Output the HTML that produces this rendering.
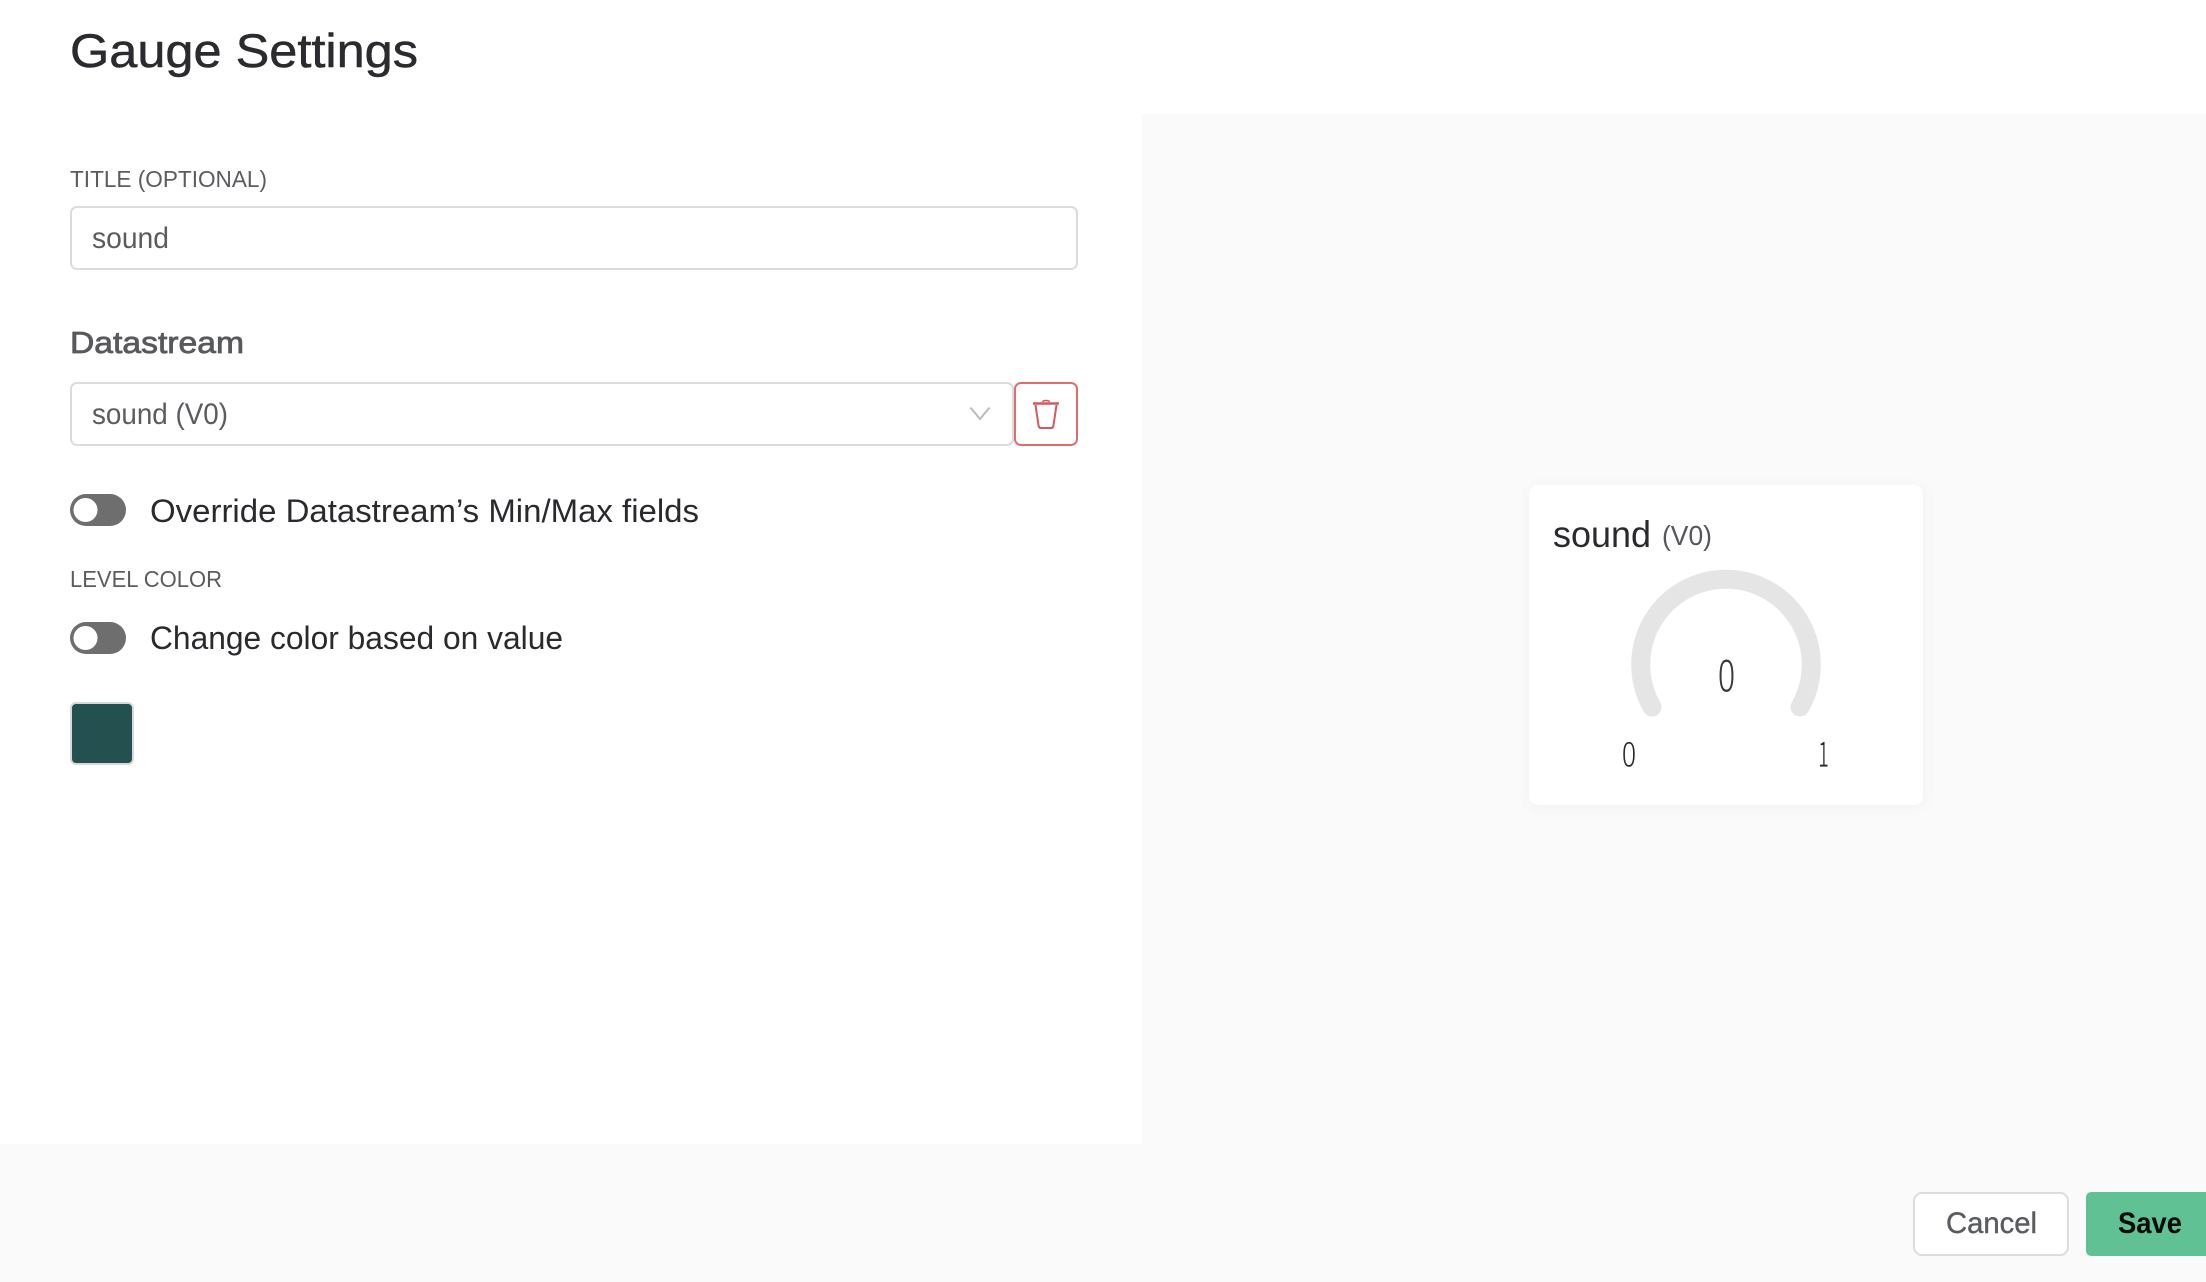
<!DOCTYPE html>
<html lang="en">
<head>
<meta charset="utf-8">
<title>Gauge Settings</title>
<style>
html,body{margin:0;padding:0;width:2206px;height:1282px;overflow:hidden;background:#fff;}
svg{display:block;position:absolute;left:0;top:0;}
text{font-family:"Liberation Sans",sans-serif;}
.card{position:absolute;left:1529px;top:485px;width:394px;height:320px;background:#fff;border-radius:9px;box-shadow:0 2px 16px rgba(0,0,0,.045);}
</style>
</head>
<body>
<svg width="2206" height="1282" viewBox="0 0 2206 1282" xmlns="http://www.w3.org/2000/svg" style="z-index:0">
  <rect x="1142" y="114" width="1064" height="1030" fill="#fafafa"/>
  <rect x="0" y="1144" width="2206" height="138" fill="#fafafa"/>
</svg>
<div class="card"></div>
<svg width="2206" height="1282" viewBox="0 0 2206 1282" xmlns="http://www.w3.org/2000/svg" style="z-index:1">
  <text x="70" y="67" font-size="47" fill="#2b2b2f" stroke="#2b2b2f" stroke-width=".5" textLength="348" lengthAdjust="spacingAndGlyphs">Gauge Settings</text>

  <text x="70" y="187" font-size="23" fill="#5b5c60" textLength="197" lengthAdjust="spacingAndGlyphs">TITLE (OPTIONAL)</text>
  <rect x="71" y="207" width="1006" height="62" rx="6" fill="#fff" stroke="#dcdcdc" stroke-width="2"/>
  <text x="92" y="248" font-size="30" fill="#5b5c60" textLength="77" lengthAdjust="spacingAndGlyphs">sound</text>

  <text x="70" y="353" font-size="31" fill="#58595d" stroke="#58595d" stroke-width=".8" textLength="174" lengthAdjust="spacingAndGlyphs">Datastream</text>
  <rect x="71" y="383" width="942" height="62" rx="6" fill="#fff" stroke="#dcdcdc" stroke-width="2"/>
  <text x="92" y="424" font-size="30" fill="#5b5c60" textLength="136" lengthAdjust="spacingAndGlyphs">sound (V0)</text>
  <path d="M970.500 407.500 L980 419 L989.500 407.500" fill="none" stroke="#bdbdbd" stroke-width="2"/>
  <rect x="1015" y="383" width="62" height="62" rx="6" fill="#fff" stroke="#e06c6e" stroke-width="2"/>
  <path d="M1033 403.500 H1059" fill="none" stroke="#d9575a" stroke-width="2.400"/>
  <path d="M1035.500 405 L1038.600 426 Q1039 428 1041 428 H1051 Q1053 428 1053.400 426 L1056.500 405" fill="none" stroke="#d9575a" stroke-width="2"/>
  <path d="M1042.500 402 Q1043 400.500 1046 400.500 Q1049 400.500 1049.500 402" fill="none" stroke="#d9575a" stroke-width="1.600"/>

  <rect x="70" y="494" width="56" height="32" rx="16" fill="#6e6e6e"/>
  <circle cx="85.500" cy="510" r="12" fill="#fff"/>
  <text x="150" y="522" font-size="32" fill="#2a2a2e" textLength="549" lengthAdjust="spacingAndGlyphs">Override Datastream’s Min/Max fields</text>

  <text x="70" y="587" font-size="23" fill="#5b5c60" textLength="152" lengthAdjust="spacingAndGlyphs">LEVEL COLOR</text>

  <rect x="70" y="622" width="56" height="32" rx="16" fill="#6e6e6e"/>
  <circle cx="85.500" cy="638" r="12" fill="#fff"/>
  <text x="150" y="649" font-size="32" fill="#2a2a2e" textLength="413" lengthAdjust="spacingAndGlyphs">Change color based on value</text>

  <rect x="71" y="703" width="62" height="61" rx="5" fill="#24504f" stroke="#d8d8d8" stroke-width="2"/>

  <text x="1553" y="547" font-size="37" fill="#2a2a2e" textLength="98" lengthAdjust="spacingAndGlyphs">sound</text>
  <text x="1662" y="545" font-size="28" fill="#55565a" textLength="50" lengthAdjust="spacingAndGlyphs">(V0)</text>

  <path d="M1652 707 A85.300 85.300 0 1 1 1800 707" fill="none" stroke="#e5e5e5" stroke-width="19" stroke-linecap="round"/>

  <text x="1718" y="692" font-size="47" fill="#3a3a3e" stroke="#fff" stroke-width="1" textLength="17" lengthAdjust="spacingAndGlyphs">0</text>
  <text x="1622" y="767" font-size="36" fill="#2a2a2e" stroke="#fff" stroke-width=".8" textLength="14" lengthAdjust="spacingAndGlyphs">0</text>
  <text x="1818" y="767" font-size="36" fill="#2a2a2e" stroke="#fff" stroke-width=".8" textLength="11" lengthAdjust="spacingAndGlyphs" style="font-family:'Noto Sans CJK JP',sans-serif">1</text>

  <rect x="1914" y="1193" width="154" height="62" rx="8" fill="#fff" stroke="#dcdcdc" stroke-width="2"/>
  <text x="1946" y="1233" font-size="30" fill="#5b5c60" stroke="#5b5c60" stroke-width=".4" textLength="91" lengthAdjust="spacingAndGlyphs">Cancel</text>
  <path d="M2206 1192 H2092 Q2086 1192 2086 1198 V1250 Q2086 1256 2092 1256 H2206 Z" fill="#5fc194"/>
  <text x="2118" y="1233" font-size="30" font-weight="bold" fill="#0a0a0a" textLength="64" lengthAdjust="spacingAndGlyphs">Save</text>
</svg>
</body>
</html>
